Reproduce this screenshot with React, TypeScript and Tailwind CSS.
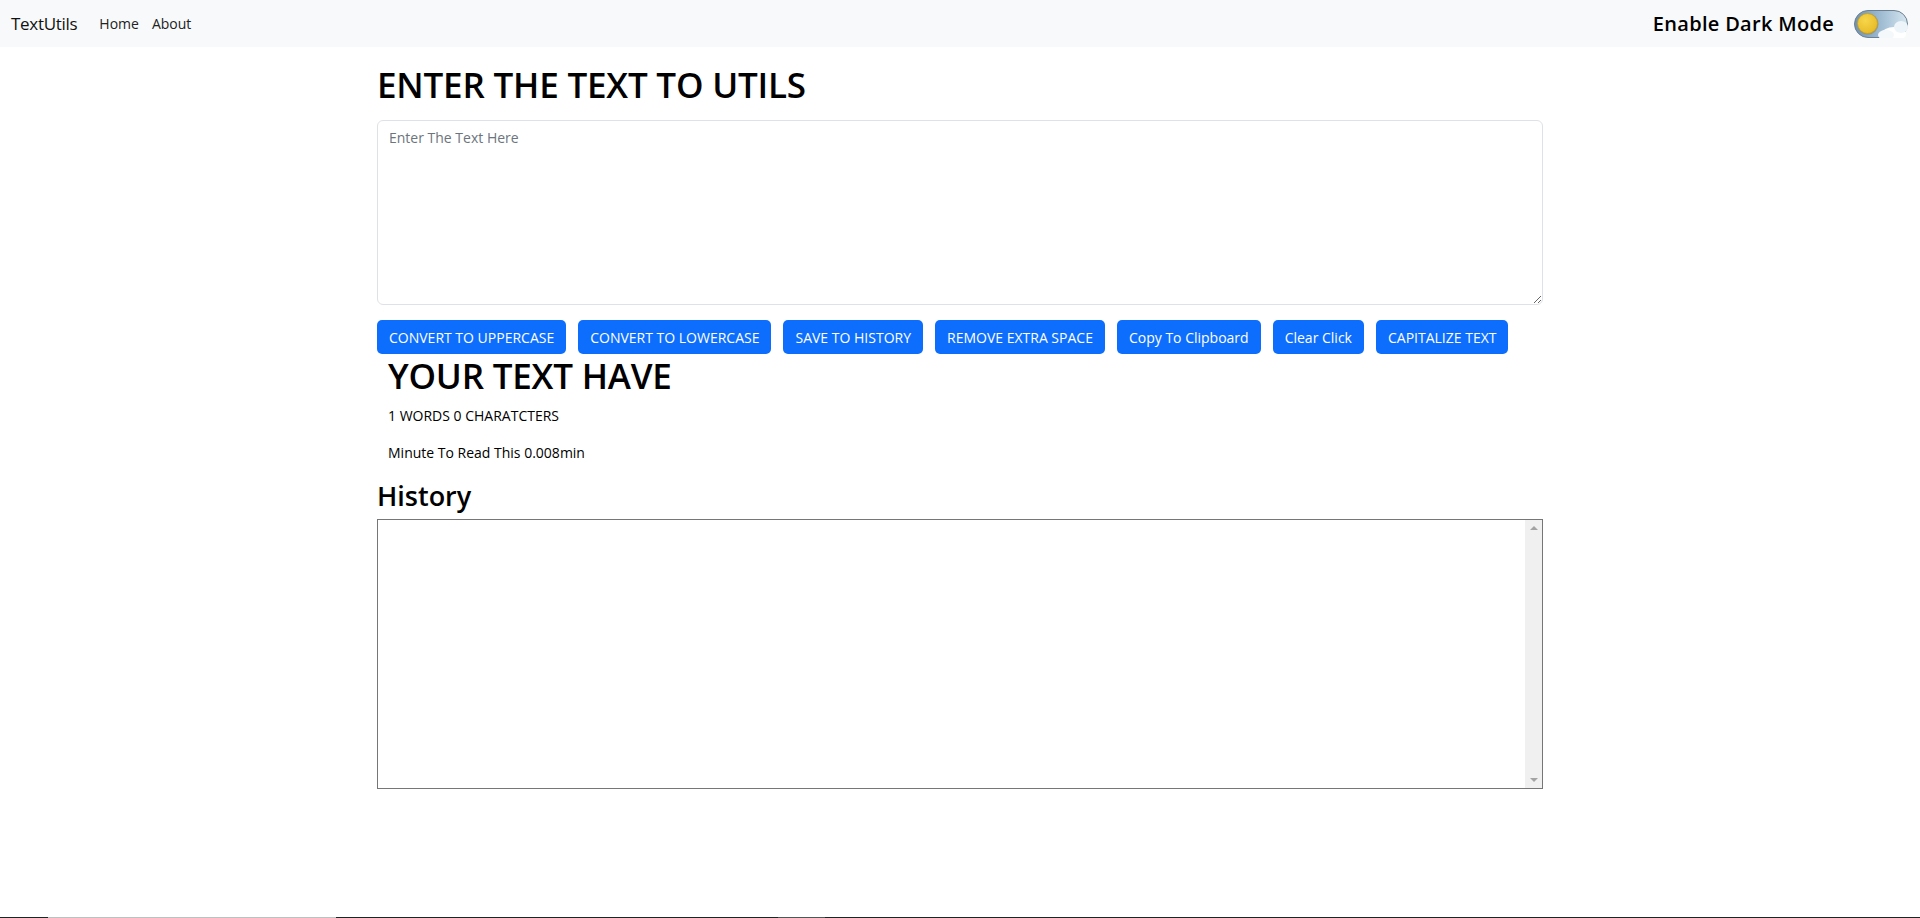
import { useState } from 'react'

const buttons = [
  'CONVERT TO UPPERCASE',
  'CONVERT TO LOWERCASE',
  'SAVE TO HISTORY',
  'REMOVE EXTRA SPACE',
  'Copy To Clipboard',
  'Clear Click',
  'CAPITALIZE TEXT',
]

function DarkToggle() {
  return (
    <svg width="54" height="28" viewBox="0 0 54 28">
      <defs>
        <linearGradient id="sky" x1="0" y1="0" x2="1" y2="0">
          <stop offset="0" stopColor="#6f92b1" />
          <stop offset="0.6" stopColor="#a9c4d8" />
          <stop offset="1" stopColor="#d7e6f0" />
        </linearGradient>
        <radialGradient id="sun" cx="0.4" cy="0.35" r="0.7">
          <stop offset="0" stopColor="#f7d64a" />
          <stop offset="1" stopColor="#e6b925" />
        </radialGradient>
      </defs>
      <rect x="0.5" y="0.5" width="53" height="27" rx="13.5" fill="url(#sky)" stroke="#6b7f90" />
      <ellipse cx="40" cy="24" rx="12" ry="7" fill="#ffffff" />
      <ellipse cx="47" cy="17" rx="7" ry="6" fill="#eef5fa" />
      <ellipse cx="32" cy="25" rx="8" ry="5" fill="#f4f8fb" />
      <circle cx="14" cy="14" r="10.5" fill="#8d7a3a" opacity="0.45" />
      <circle cx="13.5" cy="13.5" r="10" fill="url(#sun)" stroke="#c9a020" strokeWidth="0.8" />
    </svg>
  )
}

export default function App() {
  const [text, setText] = useState('')

  return (
    <div className="h-[918px] flex flex-col bg-white text-black font-['Open_Sans','Noto_Sans',sans-serif] overflow-hidden">
      {/* Navbar */}
      <nav className="shrink-0 h-[47px] bg-[#f8f9fa] flex items-center pl-[11px] pr-[12px]">
        <span className="text-[17px] text-[#111] tracking-[-0.3px]">TextUtils</span>
        <div className="ml-[22px] flex gap-[13px] text-[14px] text-[#222]">
          <span>Home</span>
          <span>About</span>
        </div>
        <div className="ml-auto flex items-center gap-[20px]">
          <span className="text-[20px] font-semibold tracking-[0.3px]">Enable Dark Mode</span>
          <DarkToggle />
        </div>
      </nav>

      {/* Main */}
      <main className="w-[1166px] mx-auto pt-[16px]">
        <h1 className="text-[35px] font-semibold leading-[43px] tracking-[-0.2px] mb-[14px]">ENTER THE TEXT TO UTILS</h1>
        <textarea
          value={text}
          onChange={(e) => setText(e.target.value)}
          placeholder="Enter The Text Here"
          className="block w-full h-[185px] border border-[#dee2e6] rounded-[6px] px-[11px] py-[6px] text-[14px] leading-[21px] placeholder:text-[#6c757d] outline-none"
        />
        <div className="flex gap-[12px] mt-[15px]">
          {buttons.map((b) => (
            <button
              key={b}
              className="h-[34px] px-[12px] rounded-[5px] bg-[#0d6efd] text-white text-[14px] whitespace-nowrap"
            >
              {b}
            </button>
          ))}
        </div>

        <div className="pl-[11px]">
          <h1 className="text-[35px] font-semibold leading-[43px] tracking-[-0.2px] mb-[8px]">YOUR TEXT HAVE</h1>
          <p className="text-[14px] leading-[21px] mb-[16px]">1 WORDS 0 CHARATCTERS</p>
          <p className="text-[14px] leading-[21px] mb-[16px]">Minute To Read This 0.008min</p>
        </div>

        <h2 className="text-[27px] font-semibold leading-[34px] mb-[6px]">History</h2>
        <div className="h-[270px] border border-[#767676] flex">
          <div className="flex-1" />
          <div className="w-[17px] bg-[#f0f0f0] flex flex-col justify-between items-center py-[6px]">
            <span className="w-0 h-0 border-l-[4px] border-r-[4px] border-b-[4px] border-l-transparent border-r-transparent border-b-[#a3a3a3]" />
            <span className="w-0 h-0 border-l-[4px] border-r-[4px] border-t-[4px] border-l-transparent border-r-transparent border-t-[#a3a3a3]" />
          </div>
        </div>
      </main>

      {/* bottom edge */}
      <div className="mt-auto h-px flex bg-[#222]">
        <div className="w-[48px]" />
        <div className="w-[288px] bg-[#c0c0c0]" />
        <div className="w-[442px]" />
        <div className="w-[47px] bg-[#555]" />
      </div>
    </div>
  )
}
